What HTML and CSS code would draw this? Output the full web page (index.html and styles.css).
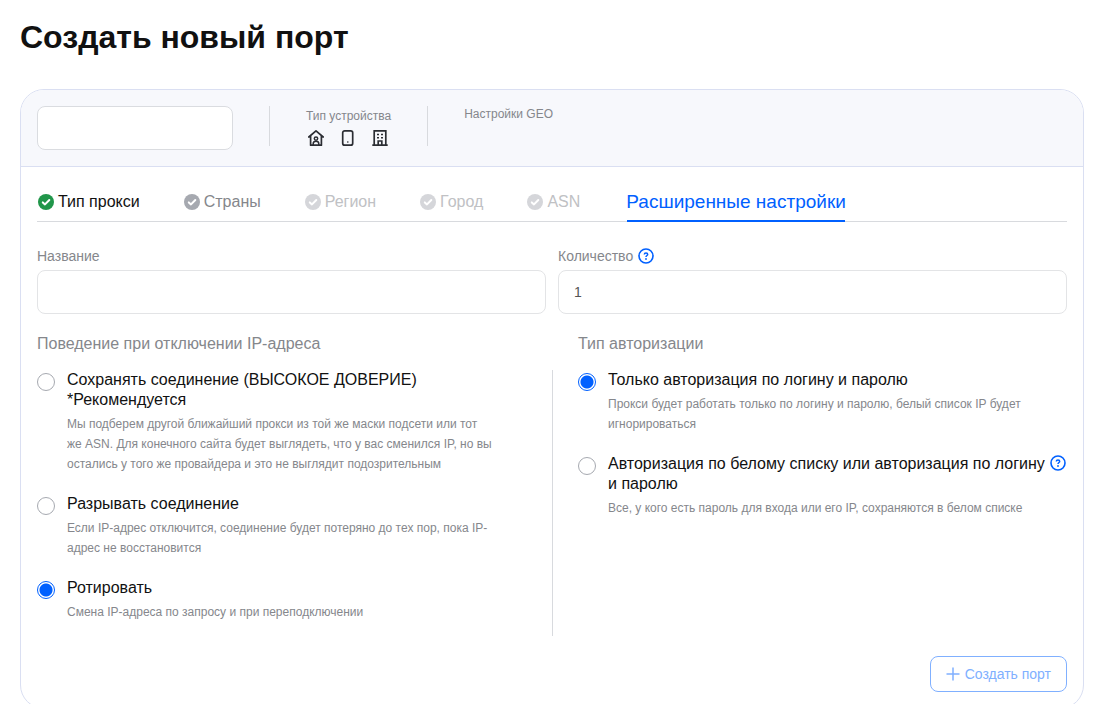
FILE: index.html
```html
<!DOCTYPE html>
<html lang="ru">
<head>
<meta charset="utf-8">
<meta name="viewport" content="width=device-width, initial-scale=1">
<title>Создать новый порт</title>
<link rel="stylesheet" href="styles.css">
</head>
<body>
<svg class="sprite" aria-hidden="true">
  <symbol id="check" viewBox="0 0 16 16">
    <circle cx="8" cy="8" r="8" fill="currentColor"/>
    <path d="M4.8 8.4 7 10.4 11.3 6" fill="none" stroke="#fff" stroke-width="2" stroke-linecap="round" stroke-linejoin="round"/>
  </symbol>
  <symbol id="help" viewBox="0 0 16 16">
    <g fill="none" stroke="currentColor">
      <circle cx="8" cy="8" r="7" stroke-width="1.6"/>
      <path d="M6.3 6.6C6.3 5.5 7 4.9 8 4.9s1.7.6 1.7 1.5C9.7 7.4 8 7.6 8 9" stroke-width="1.5"/>
    </g>
    <circle cx="8" cy="11" r=".9" fill="currentColor"/>
  </symbol>
</svg>
<main class="page">
  <h1 class="title">Создать новый порт</h1>
  <form class="card">
    <header class="summary">
      <input class="control summary-input" type="text" aria-label="Прокси">
      <div class="divider"></div>
      <div class="device">
        <span class="device-label">Тип устройства</span>
        <div class="device-icons">
          <svg class="icon-lg" viewBox="0 0 20 20" fill="none" stroke="currentColor" stroke-width="1.7" stroke-linejoin="round" stroke-linecap="round">
            <path d="M2.8 9 10 2.900 17.200 9M4.600 8v9.200h10.800V8"/>
            <circle cx="10" cy="10.600" r="1.700" stroke-width="1.500"/>
            <path d="M7.200 17v-1.200c0-1.500 1.200-2.500 2.800-2.500s2.800 1 2.800 2.500V17" stroke-width="1.500"/>
          </svg>
          <svg class="icon-lg" viewBox="0 0 20 20" fill="none" stroke="currentColor" stroke-width="1.700">
            <rect x="4.700" y="2.800" width="10" height="14.400" rx="2"/>
            <path d="M9.200 14h1.200"/>
          </svg>
          <svg class="icon-lg" viewBox="0 0 20 20" fill="none" stroke="currentColor" stroke-width="1.700">
            <path d="M4.200 17V2.800h11.600V17M2.300 17.200h15.400M8.200 17v-4h3.600v4"/>
            <path d="M7 6.400h2M11 6.400h2M7 9.800h2M11 9.800h2" stroke-width="1.500"/>
          </svg>
        </div>
      </div>
      <div class="divider"></div>
      <span class="geo-label">Настройки GEO</span>
    </header>
    <div class="body">
      <nav class="tabs">
        <button type="button" class="tab tab-done"><svg class="icon tab-check"><use href="#check"/></svg>Тип прокси</button>
        <button type="button" class="tab tab-open"><svg class="icon tab-check"><use href="#check"/></svg>Страны</button>
        <button type="button" class="tab"><svg class="icon tab-check"><use href="#check"/></svg>Регион</button>
        <button type="button" class="tab"><svg class="icon tab-check"><use href="#check"/></svg>Город</button>
        <button type="button" class="tab"><svg class="icon tab-check"><use href="#check"/></svg>ASN</button>
        <button type="button" class="tab tab-active">Расширенные настройки</button>
      </nav>
      <div class="fields">
        <div class="field">
          <label class="field-label" for="name">Название</label>
          <input class="control" id="name" type="text">
        </div>
        <div class="field">
          <label class="field-label" for="count">Количество <svg class="icon help"><use href="#help"/></svg></label>
          <input class="control" id="count" type="text" value="1">
        </div>
      </div>
      <div class="settings">
        <h2 class="heading" id="behavior">Поведение при отключении IP-адреса</h2>
        <h2 class="heading heading-right" id="auth">Тип авторизации</h2>
        <div class="options options-left" role="radiogroup" aria-labelledby="behavior">
          <div class="option">
            <input class="radio" type="radio" name="behavior" id="keep">
            <div class="option-text">
              <label class="option-title" for="keep">Сохранять соединение (ВЫСОКОЕ ДОВЕРИЕ) *Рекомендуется</label>
              <p class="option-desc">Мы подберем другой ближайший прокси из той же маски подсети или тот же ASN. Для конечного сайта будет выглядеть, что у вас сменился IP, но вы остались у того же провайдера и это не выглядит подозрительным</p>
            </div>
          </div>
          <div class="option">
            <input class="radio" type="radio" name="behavior" id="drop">
            <div class="option-text">
              <label class="option-title" for="drop">Разрывать соединение</label>
              <p class="option-desc">Если IP-адрес отключится, соединение будет потеряно до тех пор, пока IP-адрес не восстановится</p>
            </div>
          </div>
          <div class="option">
            <input class="radio" type="radio" name="behavior" id="rotate" checked>
            <div class="option-text">
              <label class="option-title" for="rotate">Ротировать</label>
              <p class="option-desc">Смена IP-адреса по запросу и при переподключении</p>
            </div>
          </div>
        </div>
        <div class="options options-right" role="radiogroup" aria-labelledby="auth">
          <div class="option">
            <input class="radio" type="radio" name="auth" id="login" checked>
            <div class="option-text">
              <label class="option-title" for="login">Только авторизация по логину и паролю</label>
              <p class="option-desc">Прокси будет работать только по логину и паролю, белый список IP будет игнорироваться</p>
            </div>
          </div>
          <div class="option">
            <input class="radio" type="radio" name="auth" id="whitelist">
            <div class="option-text">
              <label class="option-title" for="whitelist">Авторизация по белому списку или авторизация по логину и паролю</label>
              <p class="option-desc">Все, у кого есть пароль для входа или его IP, сохраняются в белом списке</p>
            </div>
            <svg class="icon help"><use href="#help"/></svg>
          </div>
        </div>
      </div>
      <div class="actions">
        <button type="submit" class="create" disabled>
          <svg class="plus" viewBox="0 0 14 14" fill="none" stroke="currentColor" stroke-width="1.5"><path d="M7 .5v13M.5 7h13"/></svg>
          Создать порт
        </button>
      </div>
    </div>
  </form>
</main>
</body>
</html>
```
FILE: styles.css
```css
* {
  box-sizing: border-box;
}

body {
  margin: 0;
  background: #fff;
  color: #111;
  font-family: "Liberation Sans", Arial, sans-serif;
  font-size: 16px;
  line-height: 20px;
}

h1, h2, p {
  margin: 0;
}

button, input {
  font: inherit;
}

.sprite {
  display: none;
}

.page {
  padding: 17px 22px 16px 20px;
}

.title {
  font-size: 32px;
  line-height: 40px;
  font-weight: 700;
  margin-bottom: 32px;
}

.card {
  border: 1px solid #dadff2;
  border-radius: 24px;
  overflow: hidden;
}

.summary {
  display: flex;
  gap: 36px;
  padding: 16px;
  background: #f7f8fc;
  border-bottom: 1px solid #dadff2;
}

.control {
  width: 100%;
  height: 44px;
  padding: 0 15px;
  border: 1px solid #e3e4e6;
  border-radius: 8px;
  background: #fff;
  color: #555;
  font-size: 14px;
}

.summary-input {
  width: 196px;
  border-color: #dadce0;
}

.divider {
  width: 1px;
  height: 40px;
  background: #d8dade;
}

.device-label {
  display: block;
  font-size: 12px;
  color: #85878c;
}

.device-icons {
  display: flex;
  gap: 12px;
  margin-top: 2px;
}

.icon-lg {
  width: 20px;
  height: 20px;
  color: #2b2d33;
}

.geo-label {
  font-size: 12px;
  line-height: 16px;
  color: #85878c;
}

.body {
  padding: 24px 16px 16px;
}

.tabs {
  display: flex;
  gap: 44px;
  padding-left: 1px;
  border-bottom: 1px solid #d8dade;
}

.tab {
  position: relative;
  display: flex;
  align-items: center;
  gap: 4px;
  height: 30px;
  padding: 0 0 8px;
  border: 0;
  background: none;
  color: #c0c1c4;
  white-space: nowrap;
}

.tab-check {
  color: #d5d6da;
}

.tab-done {
  color: #111;
}

.tab-done .tab-check {
  color: #21964a;
}

.tab-open {
  color: #85878c;
}

.tab-open .tab-check {
  color: #a6a9b0;
}

.tab-active {
  margin-left: 2px;
  color: #0060ff;
  font-size: 19px;
}

.tab-active::after {
  content: "";
  position: absolute;
  left: 1px;
  right: 1px;
  bottom: -1px;
  height: 2px;
  background: #0060ff;
}

.icon {
  flex: none;
  width: 16px;
  height: 16px;
}

.help {
  color: #0060ff;
}

.fields {
  display: grid;
  grid-template-columns: 1fr 1fr;
  gap: 12px;
  margin-top: 26px;
}

.field-label {
  display: flex;
  align-items: center;
  gap: 5px;
  margin-bottom: 6px;
  font-size: 14px;
  line-height: 16px;
  color: #85878c;
}

.settings {
  display: grid;
  grid-template-columns: 1fr 1fr;
  row-gap: 16px;
  margin-top: 20px;
}

.heading {
  font-size: 16px;
  font-weight: 400;
  color: #85878c;
}

.heading-right {
  padding-left: 26px;
}

.options {
  display: flex;
  flex-direction: column;
  gap: 20px;
  padding-bottom: 14px;
}

.options-left {
  padding-right: 60px;
}

.options-right {
  border-left: 1px solid #d8dade;
  padding-left: 25px;
}

.option {
  display: flex;
}

.radio {
  appearance: none;
  flex: none;
  width: 18px;
  height: 18px;
  margin: 3px 12px 0 0;
  border: 1px solid #a6a9b0;
  border-radius: 50%;
  background: #fff;
}

.radio:checked {
  border-color: #0060ff;
  background: radial-gradient(circle, #0060ff 6px, #fff 7px);
}

.option-text {
  flex: 1;
}

.option-title {
  display: block;
}

.option-desc {
  margin-top: 4px;
  font-size: 12px;
  color: #85878c;
}

.option .help {
  margin: 1px 1px 0 0;
}

.actions {
  display: flex;
  justify-content: flex-end;
  margin-top: 20px;
}

.create {
  display: flex;
  align-items: center;
  gap: 5px;
  height: 36px;
  padding: 0 15px;
  border: 1px solid #80b0ff;
  border-radius: 8px;
  background: #fff;
  color: #80b0ff;
  font-size: 14px;
}

.plus {
  width: 14px;
  height: 14px;
}
```
